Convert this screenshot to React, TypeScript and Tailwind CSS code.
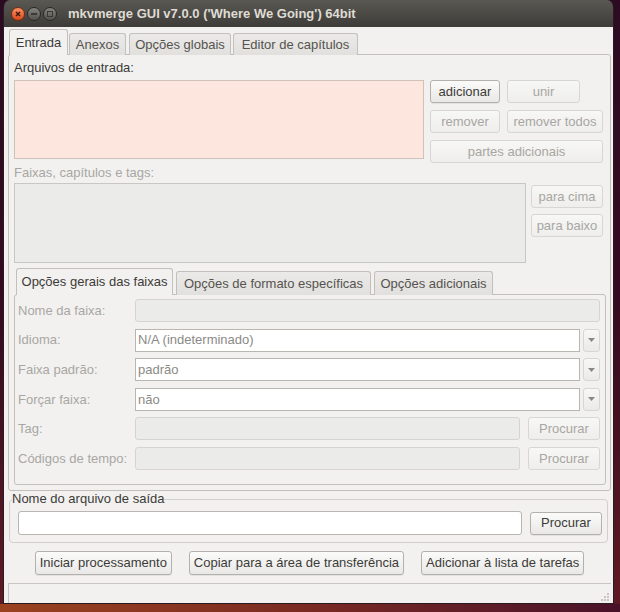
import clsx from "clsx";
import type { ReactNode } from "react";

const font = "font-['Liberation_Sans',Arial,sans-serif]";

function Btn({
  children,
  disabled,
  className,
}: {
  children: ReactNode;
  disabled?: boolean;
  className?: string;
}) {
  return (
    <div
      className={clsx(
        "flex items-center justify-center rounded-[3px] border text-[13px] bg-linear-to-b",
        disabled
          ? "border-[#d8d6d2] text-[#a8a6a2] from-[#f7f7f6] to-[#efeeec]"
          : "border-[#b4b1ac] text-[#3c3b37] from-[#fbfbfa] to-[#e9e8e6] shadow-[0_1px_0_rgba(0,0,0,0.06)]",
        className
      )}
    >
      {children}
    </div>
  );
}

function Combo({ value }: { value: string }) {
  return (
    <div className="flex flex-1 gap-[3px]">
      <div className="flex flex-1 items-center border border-[#b9b6b1] bg-white pl-[2px] text-[13px] text-[#8c8a86]">
        {value}
      </div>
      <div className="flex w-[17px] items-center justify-center rounded-[3px] border border-[#d8d6d2] bg-linear-to-b from-[#f7f7f6] to-[#ebeae8]">
        <svg width="7" height="4" viewBox="0 0 7 4">
          <path d="M0 0h7L3.5 4z" fill="#8a8884" />
        </svg>
      </div>
    </div>
  );
}

function DisabledInput() {
  return <div className="flex-1 rounded-[3px] border border-[#d6d4d0] bg-[#ebebea]" />;
}

function Row({ label, children }: { label: string; children: ReactNode }) {
  return (
    <div className="flex h-[23px] items-stretch">
      <div className="flex w-[117px] items-center text-[13px] text-[#a9a7a3]">{label}</div>
      <div className="flex flex-1 gap-[8px]">{children}</div>
    </div>
  );
}

function WinBtn({ kind }: { kind: "close" | "min" | "max" }) {
  const close = kind === "close";
  return (
    <div
      className={clsx(
        "flex h-[14px] w-[14px] items-center justify-center rounded-full border bg-linear-to-b",
        close
          ? "border-[#7a2c10] from-[#f7905f] to-[#d9461a]"
          : "border-[#2c2b28] from-[#85837e] to-[#55534e]"
      )}
    >
      {kind === "close" && (
        <svg width="6" height="6" viewBox="0 0 6 6">
          <path d="M1 1l4 4M5 1L1 5" stroke="#3b1506" strokeWidth="1.4" />
        </svg>
      )}
      {kind === "min" && <div className="h-[2px] w-[6px] bg-[#3a3935]" />}
      {kind === "max" && <div className="h-[6px] w-[6px] border-[1.5px] border-[#3a3935]" />}
    </div>
  );
}

const topTabs = [
  { name: "Entrada", w: "w-[59px]" },
  { name: "Anexos", w: "w-[57px] ml-[1px]" },
  { name: "Opções globais", w: "w-[102px] ml-[3px]" },
  { name: "Editor de capítulos", w: "w-[125px] ml-[2px]" },
];

const innerTabs = [
  { name: "Opções gerais das faixas", w: "w-[157px]" },
  { name: "Opções de formato específicas", w: "w-[195px] ml-[3px]" },
  { name: "Opções adicionais", w: "w-[119px] ml-[3px]" },
];

export default function App() {
  return (
    <div className={clsx("flex h-[612px] w-[620px] flex-col overflow-hidden bg-[#2c0b22]", font)}>
      <div className="flex flex-1 bg-linear-to-b from-[#2c0b22] via-[#35091f] to-[#5e1a22] pl-[3px]">
        <div className="flex h-[604px] w-[611px] flex-col overflow-hidden rounded-t-[7px] border-x border-b border-[#2a1a22]">
          {/* title bar */}
          <div className="flex h-[27px] shrink-0 items-center bg-linear-to-b from-[#5a5853] to-[#3d3c38] pl-[7px]">
            <div className="flex gap-[2px]">
              <WinBtn kind="close" />
              <WinBtn kind="min" />
              <WinBtn kind="max" />
            </div>
            <div className="ml-[11px] text-[13px] font-bold text-[#dfdbd2]">
              mkvmerge GUI v7.0.0 ('Where We Going') 64bit
            </div>
          </div>

          {/* client area */}
          <div className="flex flex-1 flex-col bg-[#f2f1f0] pl-[4px] pr-[2px]">
            {/* top tabs */}
            <div className="mt-[1px] flex h-[26px] items-end pl-[1px]">
              {topTabs.map((t, i) => (
                <div
                  key={t.name}
                  className={clsx(
                    "relative z-10 -mb-px flex items-center justify-center rounded-t-[3px] border border-b-0 border-[#c3c0bb] text-[13px]",
                    t.w,
                    i === 0
                      ? "h-[26px] bg-[#f2f1f0] text-[#3c3b37]"
                      : "h-[22px] bg-linear-to-b from-[#ebeae8] to-[#e1e0dd] text-[#55534f]"
                  )}
                >
                  {t.name}
                </div>
              ))}
            </div>

            {/* Entrada pane */}
            <div className="flex h-[437px] flex-col rounded-[3px] border border-[#c3c0bb] px-[5px] pt-[6px]">
              <div className="h-[19px] text-[13px] leading-[14px] text-[#3c3b37]">Arquivos de entrada:</div>
              <div className="flex gap-[6px]">
                <div className="h-[79px] w-[410px] border border-[#cfc2bb] bg-[#fde6dd]" />
                <div className="grid grid-cols-[70px_96px] gap-x-[7px] gap-y-[7px]">
                  <Btn className="h-[23px]">adicionar</Btn>
                  <Btn disabled className="h-[23px] w-[73px]">unir</Btn>
                  <Btn disabled className="h-[23px]">remover</Btn>
                  <Btn disabled className="h-[23px]">remover todos</Btn>
                  <Btn disabled className="col-span-2 h-[23px]">partes adicionais</Btn>
                </div>
              </div>

              <div className="flex h-[20px] items-center text-[13px] text-[#a9a7a3]">Faixas, capítulos e tags:</div>
              <div className="flex gap-[5px]">
                <div className="h-[80px] w-[512px] border border-[#c9c7c3] bg-[#ebebea]" />
                <div className="mt-[2px] flex flex-col gap-[6px]">
                  <Btn disabled className="h-[23px] w-[72px]">para cima</Btn>
                  <Btn disabled className="h-[23px] w-[72px]">para baixo</Btn>
                </div>
              </div>

              {/* inner tabs */}
              <div className="mt-[4px] flex h-[27px] items-end pl-[2px]">
                {innerTabs.map((t, i) => (
                  <div
                    key={t.name}
                    className={clsx(
                      "relative z-10 -mb-px flex items-center justify-center rounded-t-[3px] border border-b-0 border-[#c3c0bb] text-[13px]",
                      t.w,
                      i === 0
                        ? "h-[27px] bg-[#f2f1f0] text-[#3c3b37]"
                        : "h-[24px] bg-linear-to-b from-[#ebeae8] to-[#e1e0dd] text-[#55534f]"
                    )}
                  >
                    {t.name}
                  </div>
                ))}
              </div>
              <div className="flex h-[191px] w-[592px] flex-col gap-[6.6px] rounded-[3px] border border-[#c3c0bb] pl-[3px] pr-[5px] pt-[4px]">
                <Row label="Nome da faixa:">
                  <DisabledInput />
                </Row>
                <Row label="Idioma:">
                  <Combo value="N/A (indeterminado)" />
                </Row>
                <Row label="Faixa padrão:">
                  <Combo value="padrão" />
                </Row>
                <Row label="Forçar faixa:">
                  <Combo value="não" />
                </Row>
                <Row label="Tag:">
                  <DisabledInput />
                  <Btn disabled className="w-[72px]">Procurar</Btn>
                </Row>
                <Row label="Códigos de tempo:">
                  <DisabledInput />
                  <Btn disabled className="w-[72px]">Procurar</Btn>
                </Row>
              </div>
            </div>

            {/* output file group */}
            <div className="relative ml-[1px] mr-[3px] mt-[8px] flex h-[44px] items-center gap-[8px] rounded-[4px] border border-[#d3d0cc] pl-[8px] pr-[4px] pt-[4px]">
              <div className="absolute -top-[9px] left-[2px] bg-[#f2f1f0] text-[13px] leading-[16px] text-[#3c3b37]">
                Nome do arquivo de saída
              </div>
              <div className="h-[24px] w-[504px] rounded-[3px] border border-[#b9b6b1] bg-white" />
              <Btn className="h-[23px] w-[72px]">Procurar</Btn>
            </div>

            {/* action buttons */}
            <div className="mt-[8px] flex justify-center gap-[17px]">
              <Btn className="h-[24px] px-[4px]">Iniciar processamento</Btn>
              <Btn className="h-[24px] px-[4px]">Copiar para a área de transferência</Btn>
              <Btn className="h-[24px] px-[4px]">Adicionar à lista de tarefas</Btn>
            </div>

            {/* status bar */}
            <div className="relative mt-[8px] flex-1 border-l border-t border-[#c9c6c1]">
              <div className="absolute bottom-[2px] right-[2px] grid grid-cols-3 gap-[1px]">
                {[0, 0, 1, 0, 1, 1, 1, 1, 1].map((v, i) => (
                  <div key={i} className={clsx("h-[2px] w-[2px]", v ? "bg-[#c9c6c1]" : "bg-transparent")} />
                ))}
              </div>
            </div>
          </div>
        </div>
      </div>
      {/* desktop below the window */}
      <div className="h-[8px] shrink-0 bg-linear-to-r from-[#9a4220] via-[#7a2a22] to-[#4a1228]" />
    </div>
  );
}
